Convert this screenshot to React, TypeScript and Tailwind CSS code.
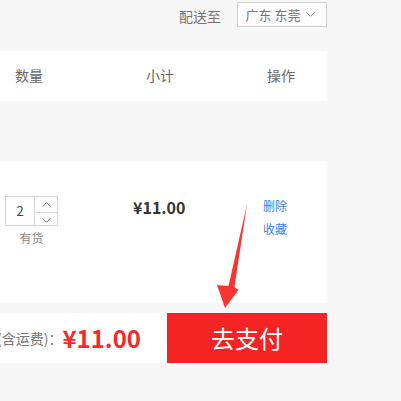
import { ChevronDown, ChevronUp } from "lucide-react";

const FONT = { fontFamily: '"Noto Sans CJK SC", "Noto Sans", sans-serif' };

function QtyStepper({ value }: { value: number }) {
  return (
    <div className="flex h-[30px] w-[53px] border border-[#d4d4d4] bg-white">
      <div className="flex w-[29px] items-center justify-center border-r border-[#d4d4d4] text-[13px] text-[#444]">
        {value}
      </div>
      <div className="flex flex-1 flex-col">
        <button
          type="button"
          className="flex flex-1 items-center justify-center border-b border-[#d4d4d4] text-[#555]"
        >
          <ChevronUp size={15} strokeWidth={1.3} />
        </button>
        <button
          type="button"
          className="flex flex-1 items-center justify-center text-[#555]"
        >
          <ChevronDown size={15} strokeWidth={1.3} />
        </button>
      </div>
    </div>
  );
}

function Arrow() {
  return (
    <svg
      className="pointer-events-none absolute left-0 top-0"
      width="401"
      height="401"
      viewBox="0 0 401 401"
    >
      <polygon
        points="247,204 234.5,287 238.5,290 225,308 217,285 228.5,286"
        fill="#fb3434"
      />
    </svg>
  );
}

export default function App() {
  return (
    <div
      className="relative h-[401px] w-[401px] overflow-hidden bg-[#f7f7f7]"
      style={FONT}
    >
      <div className="w-[327px]">
        {/* delivery location */}
        <div className="flex h-[51px] items-start justify-end pt-[2px]">
          <span className="mr-[16px] mt-[4px] text-[14px] leading-[20px] text-[#7d7369]">
            配送至
          </span>
          <button
            type="button"
            className="flex h-[25px] w-[90px] items-center justify-center gap-[3px] border border-[#cfcfcf] bg-white text-[13px] text-[#777]"
          >
            广东 东莞
            <ChevronDown size={15} strokeWidth={1.4} className="text-[#888]" />
          </button>
        </div>

        {/* table header */}
        <div className="grid h-[50px] grid-cols-[146px_121px_60px] items-center bg-white pb-[2px] text-[14px] text-[#666]">
          <span className="pl-[15px]">数量</span>
          <span>小计</span>
          <span>操作</span>
        </div>

        <div className="h-[60px]" />

        {/* product row */}
        <div className="grid h-[142px] grid-cols-[133px_130px_64px] items-start bg-white">
          <div className="flex flex-col items-start pl-[5px] pt-[35px]">
            <QtyStepper value={2} />
            <span className="mt-[3px] w-[53px] text-center text-[12px] leading-[18px] text-[#888]">
              有货
            </span>
          </div>
          <div className="pt-[34px] text-[16px] font-bold leading-[24px] text-[#333]">
            ¥11.00
          </div>
          <div className="flex flex-col pt-[33px] text-[12px] leading-[23px] text-[#3b7fd8]">
            <a href="#">删除</a>
            <a href="#">收藏</a>
          </div>
        </div>

        <div className="h-[10px]" />

        {/* checkout bar */}
        <div className="flex h-[50px] items-stretch bg-white">
          <div className="flex w-[167px] items-center justify-end overflow-hidden whitespace-nowrap pr-[26px]">
            <span className="text-[14px] text-[#777]">总价(含运费)：</span>
            <span className="text-[24px] font-bold leading-none text-[#f42a2a]">
              ¥11.00
            </span>
          </div>
          <button
            type="button"
            className="flex flex-1 items-center justify-center bg-[#f52424] text-[24px] text-white"
          >
            去支付
          </button>
        </div>
      </div>
      <Arrow />
    </div>
  );
}
